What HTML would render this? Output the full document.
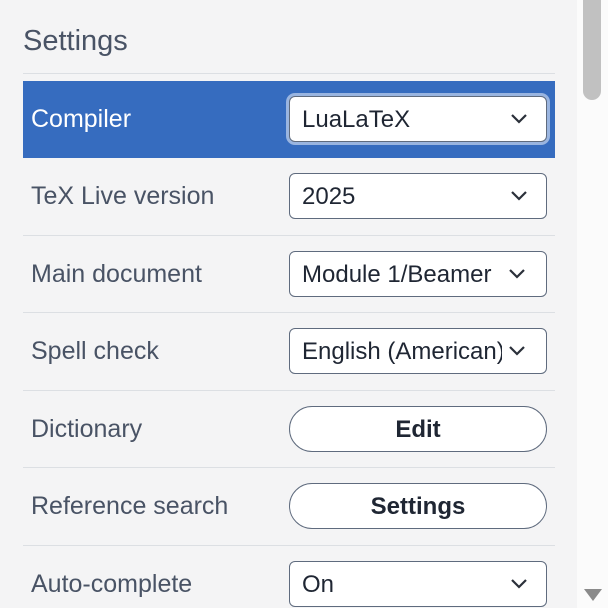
<!DOCTYPE html>
<html style="overflow:hidden;height:608px"><head><style>
body{margin:0;width:608px;height:608px;overflow:hidden;background:#f4f4f5;font-family:"Liberation Sans",sans-serif;position:relative}
.sb{position:absolute;left:577px;top:0;width:31px;height:608px;background:#fbfbfb}
.thumb{position:absolute;left:583px;top:0;width:18px;height:100px;background:#c1c1c1;border-radius:0 0 9px 9px}
.arr{position:absolute;left:584px;top:589px;width:0;height:0;border-left:9px solid transparent;border-right:9px solid transparent;border-top:12px solid #8a8a8a}
h1{position:absolute;left:23px;top:25px;margin:0;font-weight:normal;font-size:29px;color:#495365}
.hr{position:absolute;left:23px;width:532px;height:1px;background:#dcdfe3}
.row{position:absolute;left:23px;width:532px;height:77px}
.row.sel{background:#366cbf}
.lab{position:absolute;left:8px;top:0;line-height:77px;font-size:25px;color:#495365}
.sel .lab{color:#fff}
.ctl{position:absolute;left:266px;top:15px;width:256px;height:44px;border:1px solid #5f6b7e;border-radius:6px;background:#fff;font-size:24px;color:#1f2633;line-height:46px;overflow:hidden;white-space:nowrap}
.ctl span{position:absolute;left:12px;width:200px;overflow:hidden}
.ctl svg{position:absolute;right:18px;top:16px}
.sel .ctl{box-shadow:0 0 0 3px #9ab5e0}
.btn{border-radius:23px;text-align:center;font-weight:bold}
</style></head><body>
<div class="sb"></div><div class="thumb"></div><div class="arr"></div>
<h1>Settings</h1>
<div class="hr" style="top:73px"></div>
<div class="row sel" style="top:81px"><div class="lab">Compiler</div><div class="ctl"><span>LuaLaTeX</span><svg width="18" height="12" viewBox="0 0 18 12"><path d="M2 2l7 7 7-7" fill="none" stroke="#2b303a" stroke-width="2.2"/></svg></div></div>
<div class="row" style="top:158px"><div class="lab">TeX Live version</div><div class="ctl"><span>2025</span><svg width="18" height="12" viewBox="0 0 18 12"><path d="M2 2l7 7 7-7" fill="none" stroke="#2b303a" stroke-width="2.2"/></svg></div></div>
<div class="hr" style="top:235px"></div>
<div class="row" style="top:236px"><div class="lab">Main document</div><div class="ctl"><span>Module 1/Beamer</span><svg width="18" height="12" viewBox="0 0 18 12" style="right:20px"><path d="M2 2l7 7 7-7" fill="none" stroke="#2b303a" stroke-width="2.2"/></svg></div></div>
<div class="hr" style="top:312px"></div>
<div class="row" style="top:313px"><div class="lab">Spell check</div><div class="ctl"><span>English (American)</span><svg width="18" height="12" viewBox="0 0 18 12" style="right:20px"><path d="M2 2l7 7 7-7" fill="none" stroke="#2b303a" stroke-width="2.2"/></svg></div></div>
<div class="hr" style="top:390px"></div>
<div class="row" style="top:391px"><div class="lab">Dictionary</div><div class="ctl btn">Edit</div></div>
<div class="hr" style="top:467px"></div>
<div class="row" style="top:468px"><div class="lab">Reference search</div><div class="ctl btn">Settings</div></div>
<div class="hr" style="top:545px"></div>
<div class="row" style="top:546px"><div class="lab">Auto-complete</div><div class="ctl"><span>On</span><svg width="18" height="12" viewBox="0 0 18 12"><path d="M2 2l7 7 7-7" fill="none" stroke="#2b303a" stroke-width="2.2"/></svg></div></div>
</body></html>
